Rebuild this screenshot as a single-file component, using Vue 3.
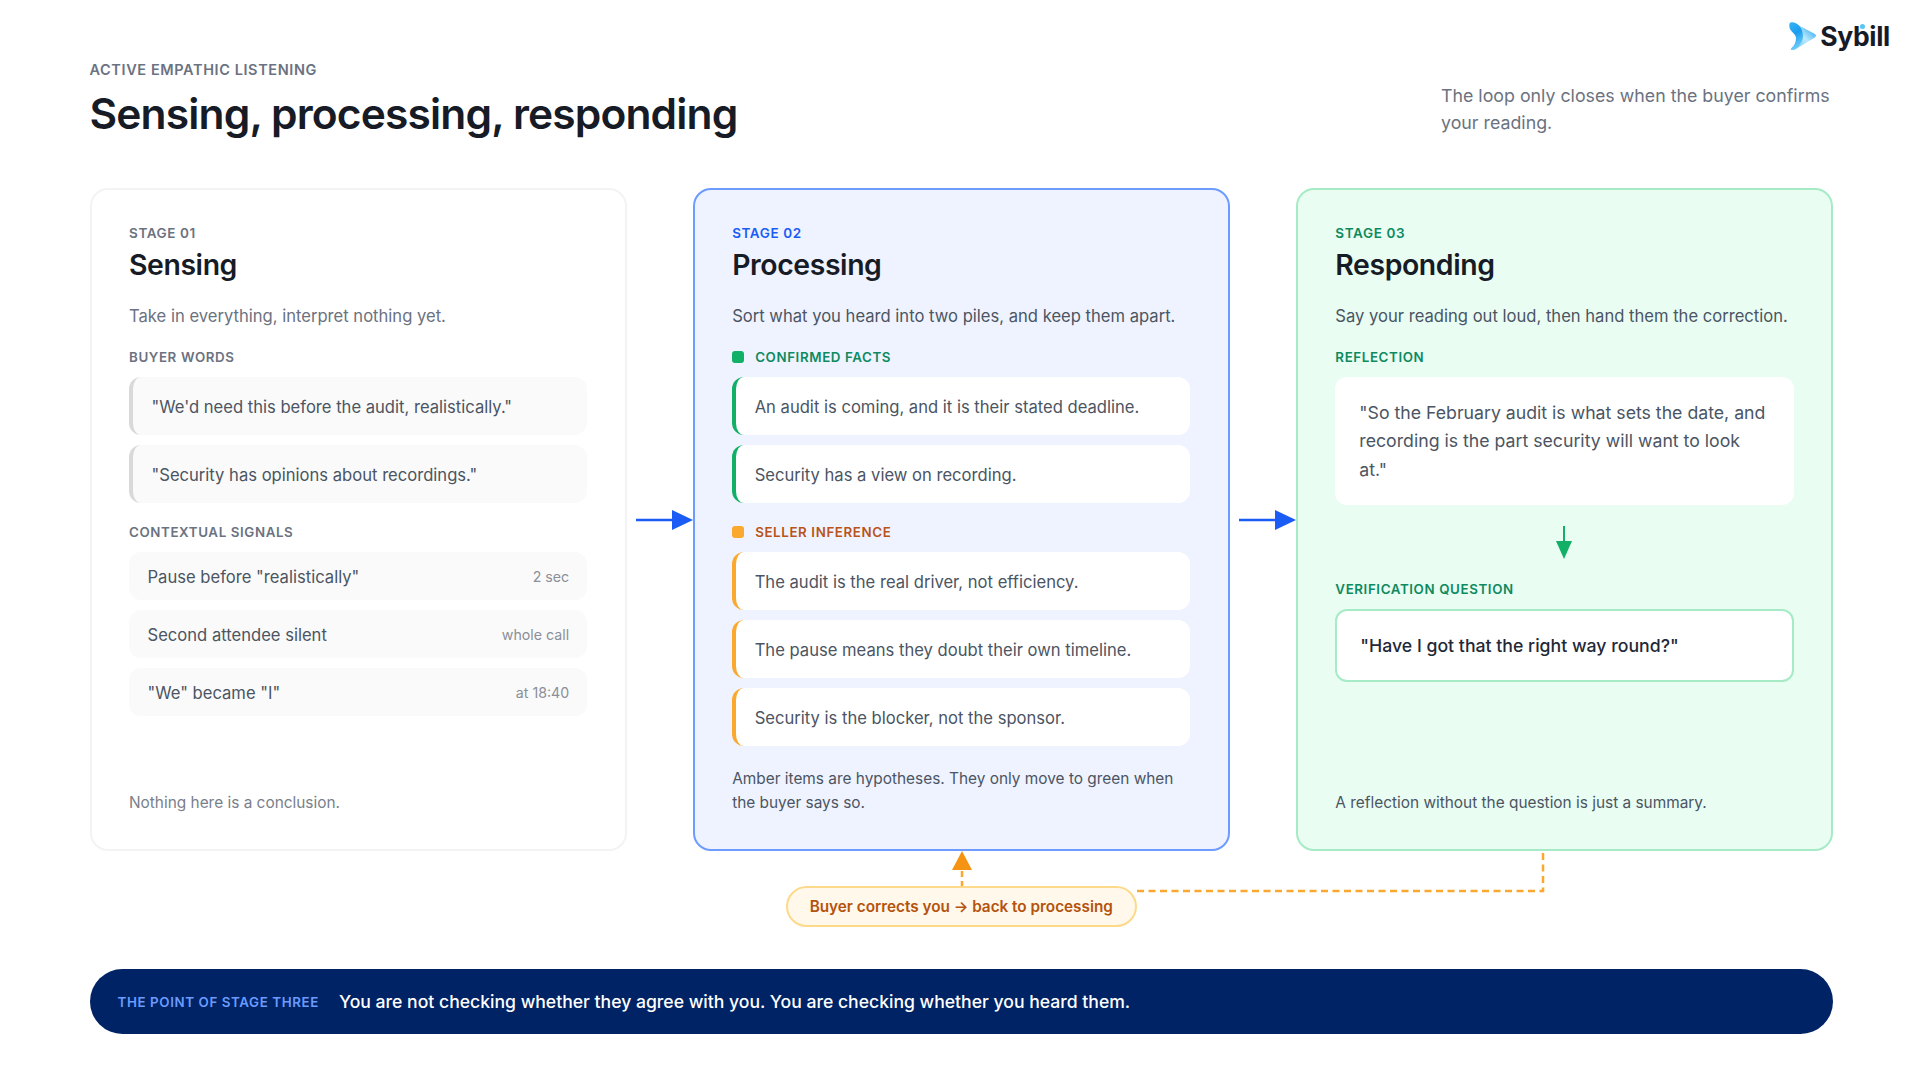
<script setup>
const quotes = ['"We\'d need this before the audit, realistically."', '"Security has opinions about recordings."']
const signals = [
  { text: 'Pause before "realistically"', meta: '2 sec' },
  { text: 'Second attendee silent', meta: 'whole call' },
  { text: '"We" became "I"', meta: 'at 18:40' },
]
const facts = ['An audit is coming, and it is their stated deadline.', 'Security has a view on recording.']
const inferences = [
  'The audit is the real driver, not efficiency.',
  'The pause means they doubt their own timeline.',
  'Security is the blocker, not the sponsor.',
]
</script>

<template>
  <main class="page">
    <div class="brand">
      <svg class="brand-mark" viewBox="0 0 28 30" aria-hidden="true">
        <defs>
          <linearGradient id="sy-a" x1="0.9" y1="0.1" x2="0.2" y2="0.9">
            <stop offset="0" stop-color="#2FA9F3" />
            <stop offset="0.55" stop-color="#BCE9FC" />
            <stop offset="1" stop-color="#7CD0F8" />
          </linearGradient>
          <linearGradient id="sy-b" x1="0" y1="0" x2="0.3" y2="1">
            <stop offset="0" stop-color="#38B4F6" />
            <stop offset="0.5" stop-color="#1A9DF0" />
            <stop offset="1" stop-color="#6CCBF8" />
          </linearGradient>
        </defs>
        <path d="M8 3.500L25.500 12.800C27.500 14 27.500 15.500 25.500 16.800L6 28.500C4 29.500 3 28 4 27C9 22 11 9 8 3.500Z" fill="url(#sy-a)" />
        <path d="M1 1.800C5 .2 9.500 2.500 12 7.500C15 13 14.500 19 11 23.500C9 26.500 6 29 3 29C1.500 29 1.500 28 2.500 27C5.500 24.500 7 20.500 7 17C7 13 3 12 1 8C0 6 0 2.800 1 1.800Z" fill="url(#sy-b)" />
      </svg>
      <span class="brand-name">Sybill<i class="brand-dot"></i></span>
    </div>

    <header class="head">
      <div>
        <p class="eyebrow">ACTIVE EMPATHIC LISTENING</p>
        <h1 class="title">Sensing, processing, responding</h1>
      </div>
      <p class="lede">The loop only closes when the buyer confirms your reading.</p>
    </header>

    <section class="flow">
      <article class="card card-sense">
        <p class="stage">STAGE 01</p>
        <h2 class="name">Sensing</h2>
        <p class="desc">Take in everything, interpret nothing yet.</p>
        <p class="label">BUYER WORDS</p>
        <ul class="items">
          <li v-for="q in quotes" :key="q" class="item item-grey">{{ q }}</li>
        </ul>
        <p class="label label-next">CONTEXTUAL SIGNALS</p>
        <ul class="items">
          <li v-for="s in signals" :key="s.text" class="signal">
            <span>{{ s.text }}</span><span class="signal-meta">{{ s.meta }}</span>
          </li>
        </ul>
        <p class="foot">Nothing here is a conclusion.</p>
      </article>

      <svg class="connector" viewBox="0 0 57 22" aria-hidden="true">
        <path d="M0 11H38" stroke="#1A5CF5" stroke-width="2.500" fill="none" />
        <path d="M36 1L57 11L36 21Z" fill="#1A5CF5" />
      </svg>

      <article class="card card-process">
        <p class="stage">STAGE 02</p>
        <h2 class="name">Processing</h2>
        <p class="desc">Sort what you heard into two piles, and keep them apart.</p>
        <p class="label label-green"><i class="dot dot-green"></i>CONFIRMED FACTS</p>
        <ul class="items">
          <li v-for="f in facts" :key="f" class="item item-green">{{ f }}</li>
        </ul>
        <p class="label label-amber label-next"><i class="dot dot-amber"></i>SELLER INFERENCE</p>
        <ul class="items">
          <li v-for="f in inferences" :key="f" class="item item-amber">{{ f }}</li>
        </ul>
        <p class="foot foot-dark">Amber items are hypotheses. They only move to green when the buyer says so.</p>
      </article>

      <svg class="connector" viewBox="0 0 57 22" aria-hidden="true">
        <path d="M0 11H38" stroke="#1A5CF5" stroke-width="2.500" fill="none" />
        <path d="M36 1L57 11L36 21Z" fill="#1A5CF5" />
      </svg>

      <article class="card card-respond">
        <p class="stage">STAGE 03</p>
        <h2 class="name">Responding</h2>
        <p class="desc">Say your reading out loud, then hand them the correction.</p>
        <p class="label label-green">REFLECTION</p>
        <div class="reflection">"So the February audit is what sets the date, and recording is the part security will want to look at."</div>
        <svg class="down" viewBox="0 0 16 33" aria-hidden="true">
          <path d="M8 0V18" stroke="#12B066" stroke-width="2" fill="none" />
          <path d="M0 15H16L8 33Z" fill="#12B066" />
        </svg>
        <p class="label label-green">VERIFICATION QUESTION</p>
        <div class="verify">"Have I got that the right way round?"</div>
        <p class="foot">A reflection without the question is just a summary.</p>
      </article>
    </section>

    <section class="loop">
      <svg class="loop-lines" viewBox="0 0 1744 118" aria-hidden="true">
        <path d="M872 0L882 19H862Z" fill="#F59312" />
        <path d="M872 20V35" stroke="#FBA92E" stroke-width="2.500" stroke-dasharray="6 4" fill="none" />
        <path d="M1047 40H1453V0" stroke="#FBA92E" stroke-width="2.500" stroke-dasharray="7 4.500" fill="none" />
      </svg>
      <div class="loop-pill">Buyer corrects you → back to processing</div>
    </section>

    <aside class="banner">
      <span class="banner-label">THE POINT OF STAGE THREE</span>
      <span class="banner-text">You are not checking whether they agree with you. You are checking whether you heard them.</span>
    </aside>
  </main>
</template>

<style>
html, body { margin: 0; background: #fff; }
</style>

<style scoped>
.page {
  box-sizing: border-box;
  width: 1920px;
  height: 1080px;
  padding: 0 87px 0 89.5px;
  overflow: hidden;
  background: #fff;
  font-family: Inter, "Liberation Sans", sans-serif;
  color: #111827;
}
p, h1, h2, ul { margin: 0; padding: 0; }
ul { list-style: none; }
i { font-style: normal; }

.brand {
  display: flex;
  justify-content: flex-end;
  align-items: center;
  gap: 3px;
  height: 30px;
  padding-top: 21px;
  margin-right: -57px;
}
.brand-mark { width: 28px; height: 30px; }
.brand-name {
  position: relative;
  font-size: 26.5px;
  line-height: 30px;
  font-weight: 700;
  letter-spacing: -0.3px;
  color: #161B26;
}
.brand-dot {
  position: absolute;
  left: 39.5px;
  top: 2.5px;
  width: 5px;
  height: 5px;
  border-radius: 50%;
  background: #5BC4F5;
}

.head {
  display: flex;
  justify-content: space-between;
  align-items: flex-end;
  margin-top: 10px;
}
.eyebrow {
  font-size: 14.5px;
  line-height: 18px;
  font-weight: 600;
  letter-spacing: 0.6px;
  color: #6B7280;
}
.title {
  margin-top: 9px;
  font-size: 42.5px;
  line-height: 52px;
  font-weight: 600;
  letter-spacing: -0.85px;
  color: #161B26;
}
.lede {
  width: 392px;
  font-size: 17.8px;
  line-height: 27px;
  color: #6B7280;
  padding-bottom: 4px;
}

.flow {
  display: grid;
  grid-template-columns: 1fr 66px 1fr 66px 1fr;
  align-items: stretch;
  height: 663px;
  margin-top: 48px;
}
.connector { align-self: center; justify-self: end; width: 57px; height: 22px; }

.card {
  box-sizing: border-box;
  display: flex;
  flex-direction: column;
  min-width: 0;
  padding: 35px 37.5px 34px;
  border: 2px solid #F3F3F5;
  border-radius: 18px;
  background: #fff;
}
.card-process { background: #EFF3FF; border-color: #6E9BFF; }
.card-respond { background: #E9FDF2; border-color: #A6EBC6; }

.stage {
  font-size: 13.5px;
  line-height: 16px;
  font-weight: 600;
  letter-spacing: 0.6px;
  color: #6B7280;
}
.card-process .stage { color: #1A5CF5; }
.card-respond .stage { color: #0D8A5F; }
.name {
  margin-top: 6px;
  font-size: 28.4px;
  line-height: 36px;
  font-weight: 600;
  letter-spacing: -0.4px;
  color: #161B26;
}
.desc {
  margin-top: 20px;
  font-size: 16.6px;
  line-height: 26px;
  color: #6B7280;
}
.card-process .desc, .card-respond .desc { color: #4B5563; }
.label {
  display: flex;
  align-items: center;
  gap: 11px;
  margin-top: 20px;
  font-size: 13.35px;
  line-height: 16px;
  font-weight: 600;
  letter-spacing: 0.6px;
  color: #6B7280;
}
.label-next { margin-top: 21px; }
.label-green { color: #0D8A5F; }
.label-amber { color: #B9531A; }
.dot { width: 12px; height: 12px; border-radius: 3px; }
.dot-green { background: #12B066; }
.dot-amber { background: #FBA92E; }

.items {
  display: flex;
  flex-direction: column;
  gap: 10px;
  margin-top: 12px;
}
.item {
  box-sizing: border-box;
  display: flex;
  align-items: center;
  height: 58px;
  padding: 1px 0 0 18.5px;
  border-left: 4px solid;
  border-radius: 12px;
  font-size: 16.6px;
  line-height: 24px;
  color: #4B5563;
}
.item-grey { background: #FAFAFA; border-color: #D9D9DC; }
.item-green { background: #fff; border-color: #12B066; }
.item-amber { background: #fff; border-color: #FBA92E; }
.signal {
  box-sizing: border-box;
  display: flex;
  justify-content: space-between;
  align-items: center;
  height: 48px;
  padding: 1px 18px 0 18.5px;
  border-radius: 12px;
  background: #FAFAFA;
  font-size: 16.6px;
  color: #4B5563;
}
.signal-meta { font-size: 14.2px; color: #8A8F98; }

.foot {
  margin-top: auto;
  font-size: 15.4px;
  line-height: 24px;
  color: #7A808A;
}
.card-process .foot, .card-respond .foot { color: #4B5563; }

.reflection {
  box-sizing: border-box;
  margin-top: 12px;
  padding: 22px 24px;
  height: 128px;
  border-radius: 12px;
  background: #fff;
  font-size: 17.7px;
  line-height: 28.4px;
  color: #4B5563;
}
.down {
  align-self: center;
  flex: none;
  width: 16px;
  height: 33px;
  margin: 21px 0 2px;
}
.verify {
  box-sizing: border-box;
  display: flex;
  align-items: center;
  height: 73px;
  margin-top: 12px;
  padding: 0 23px;
  border: 2px solid #A6EBC6;
  border-radius: 12px;
  background: #fff;
  font-size: 17.7px;
  font-weight: 500;
  color: #1F2937;
}

.loop {
  position: relative;
  display: flex;
  justify-content: center;
  height: 118px;
}
.loop-lines {
  position: absolute;
  left: 0;
  top: 0;
  width: 1744px;
  height: 118px;
}
.loop-pill {
  position: relative;
  box-sizing: border-box;
  align-self: flex-start;
  margin-top: 35px;
  padding: 0 22px;
  height: 41px;
  line-height: 37px;
  border: 2px solid #FDD98A;
  border-radius: 21px;
  background: #FFF8EB;
  font-size: 15.3px;
  font-weight: 600;
  color: #B4530D;
  white-space: nowrap;
}

.banner {
  box-sizing: border-box;
  display: flex;
  align-items: center;
  gap: 20px;
  height: 65px;
  padding: 0 28px;
  border-radius: 33px;
  background: #002366;
}
.banner-label {
  font-size: 13.35px;
  font-weight: 600;
  letter-spacing: 0.6px;
  color: #6B9BFF;
}
.banner-text {
  font-size: 17.6px;
  font-weight: 500;
  color: #fff;
}
</style>
